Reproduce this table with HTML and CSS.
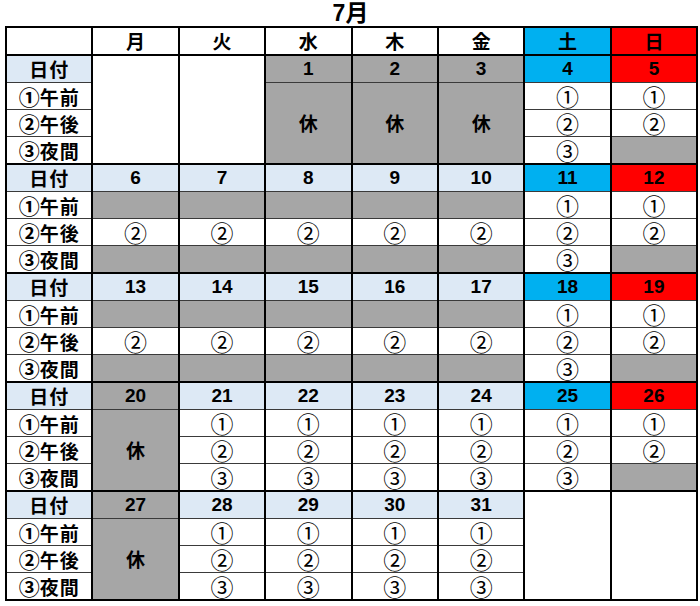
FILE: index.html
```html
<!DOCTYPE html>
<html lang="ja">
<head>
<meta charset="utf-8">
<title>7月</title>
<link rel="stylesheet" href="styles.css">
</head>
<body>
<div class="page">
  <div class="title">7月</div>
  <table class="cal">
    <colgroup>
      <col><col><col><col><col><col><col><col>
    </colgroup>
    <thead>
      <tr class="head">
        <th></th><th>月</th><th>火</th><th>水</th><th>木</th><th>金</th><th class="sat">土</th><th class="sun">日</th>
      </tr>
    </thead>
    <tbody class="week">
      <tr class="date">
        <th class="lbl day">日付</th>
        <td rowspan="4" class="blank"></td>
        <td rowspan="4" class="blank"></td>
        <td class="num off">1</td>
        <td class="num off">2</td>
        <td class="num off">3</td>
        <td class="num sat">4</td>
        <td class="num sun">5</td>
      </tr>
      <tr>
        <th class="lbl"><span class="c">①</span>午前</th>
        <td rowspan="3" class="off kyu">休</td>
        <td rowspan="3" class="off kyu">休</td>
        <td rowspan="3" class="off kyu">休</td>
        <td class="mk">①</td>
        <td class="mk">①</td>
      </tr>
      <tr>
        <th class="lbl"><span class="c">②</span>午後</th>
        <td class="mk">②</td>
        <td class="mk">②</td>
      </tr>
      <tr>
        <th class="lbl"><span class="c">③</span>夜間</th>
        <td class="mk">③</td>
        <td class="off"></td>
      </tr>
    </tbody>
    <tbody class="week">
      <tr class="date">
        <th class="lbl day">日付</th>
        <td class="num day">6</td><td class="num day">7</td><td class="num day">8</td><td class="num day">9</td><td class="num day">10</td>
        <td class="num sat">11</td><td class="num sun">12</td>
      </tr>
      <tr>
        <th class="lbl"><span class="c">①</span>午前</th>
        <td class="off"></td><td class="off"></td><td class="off"></td><td class="off"></td><td class="off"></td>
        <td class="mk">①</td><td class="mk">①</td>
      </tr>
      <tr>
        <th class="lbl"><span class="c">②</span>午後</th>
        <td class="mk">②</td><td class="mk">②</td><td class="mk">②</td><td class="mk">②</td><td class="mk">②</td>
        <td class="mk">②</td><td class="mk">②</td>
      </tr>
      <tr>
        <th class="lbl"><span class="c">③</span>夜間</th>
        <td class="off"></td><td class="off"></td><td class="off"></td><td class="off"></td><td class="off"></td>
        <td class="mk">③</td><td class="off"></td>
      </tr>
    </tbody>
    <tbody class="week">
      <tr class="date">
        <th class="lbl day">日付</th>
        <td class="num day">13</td><td class="num day">14</td><td class="num day">15</td><td class="num day">16</td><td class="num day">17</td>
        <td class="num sat">18</td><td class="num sun">19</td>
      </tr>
      <tr>
        <th class="lbl"><span class="c">①</span>午前</th>
        <td class="off"></td><td class="off"></td><td class="off"></td><td class="off"></td><td class="off"></td>
        <td class="mk">①</td><td class="mk">①</td>
      </tr>
      <tr>
        <th class="lbl"><span class="c">②</span>午後</th>
        <td class="mk">②</td><td class="mk">②</td><td class="mk">②</td><td class="mk">②</td><td class="mk">②</td>
        <td class="mk">②</td><td class="mk">②</td>
      </tr>
      <tr>
        <th class="lbl"><span class="c">③</span>夜間</th>
        <td class="off"></td><td class="off"></td><td class="off"></td><td class="off"></td><td class="off"></td>
        <td class="mk">③</td><td class="off"></td>
      </tr>
    </tbody>
    <tbody class="week">
      <tr class="date">
        <th class="lbl day">日付</th>
        <td class="num off">20</td>
        <td class="num day">21</td><td class="num day">22</td><td class="num day">23</td><td class="num day">24</td>
        <td class="num sat">25</td><td class="num sun">26</td>
      </tr>
      <tr>
        <th class="lbl"><span class="c">①</span>午前</th>
        <td rowspan="3" class="off kyu">休</td>
        <td class="mk">①</td><td class="mk">①</td><td class="mk">①</td><td class="mk">①</td>
        <td class="mk">①</td><td class="mk">①</td>
      </tr>
      <tr>
        <th class="lbl"><span class="c">②</span>午後</th>
        <td class="mk">②</td><td class="mk">②</td><td class="mk">②</td><td class="mk">②</td>
        <td class="mk">②</td><td class="mk">②</td>
      </tr>
      <tr>
        <th class="lbl"><span class="c">③</span>夜間</th>
        <td class="mk">③</td><td class="mk">③</td><td class="mk">③</td><td class="mk">③</td>
        <td class="mk">③</td><td class="off"></td>
      </tr>
    </tbody>
    <tbody class="week">
      <tr class="date">
        <th class="lbl day">日付</th>
        <td class="num off">27</td>
        <td class="num day">28</td><td class="num day">29</td><td class="num day">30</td><td class="num day">31</td>
        <td rowspan="4" class="blank"></td>
        <td rowspan="4" class="blank"></td>
      </tr>
      <tr>
        <th class="lbl"><span class="c">①</span>午前</th>
        <td rowspan="3" class="off kyu">休</td>
        <td class="mk">①</td><td class="mk">①</td><td class="mk">①</td><td class="mk">①</td>
      </tr>
      <tr>
        <th class="lbl"><span class="c">②</span>午後</th>
        <td class="mk">②</td><td class="mk">②</td><td class="mk">②</td><td class="mk">②</td>
      </tr>
      <tr>
        <th class="lbl"><span class="c">③</span>夜間</th>
        <td class="mk">③</td><td class="mk">③</td><td class="mk">③</td><td class="mk">③</td>
      </tr>
    </tbody>
  </table>
</div>
</body>
</html>
```

FILE: styles.css
```css
html, body {
  margin: 0;
  padding: 0;
  background: #ffffff;
}

body {
  font-family: "Liberation Sans", "Noto Sans CJK JP", sans-serif;
  color: #000000;
}

.page {
  width: 691px;
  margin-left: 5px;
}

.title {
  height: 26px;
  line-height: 26px;
  text-align: center;
  font-size: 23px;
  font-weight: bold;
  font-family: "Liberation Sans", "Noto Sans CJK JP", sans-serif;
}

.cal {
  width: 691px;
  table-layout: fixed;
  border-collapse: collapse;
  border: 2px solid #000;
}

.cal col {
  width: 86.4px;
}

.cal th,
.cal td {
  padding: 0;
  height: 26px;
  text-align: center;
  vertical-align: middle;
  border-left: 2px solid #000;
  border-right: 2px solid #000;
  border-top: 1px solid #3a3a3a;
  border-bottom: 1px solid #3a3a3a;
  font-size: 18px;
  line-height: 20px;
  background: #ffffff;
}

.cal .head th {
  font-family: "Noto Sans CJK JP", sans-serif;
  font-weight: bold;
  font-size: 19px;
  border-top: 2px solid #000;
  border-bottom: 2px solid #000;
}

.cal .date th,
.cal .date td {
  border-top: 2px solid #000;
}

.cal .week tr:last-child th,
.cal .week tr:last-child td {
  border-bottom: 2px solid #000;
}

.cal .blank {
  border-top: 2px solid #000;
  border-bottom: 2px solid #000;
}

.cal .lbl {
  font-family: "Noto Sans CJK JP", sans-serif;
  font-weight: bold;
  font-size: 19px;
  letter-spacing: 1px;
  white-space: nowrap;
}

.cal .lbl .c {
  font-size: 21px;
  letter-spacing: 0;
}

.cal .day {
  background: #dde9f5;
}

.cal .num {
  font-family: "Liberation Sans", sans-serif;
  font-weight: bold;
  font-size: 19px;
}

.cal .mk {
  font-family: "Noto Sans CJK JP", sans-serif;
  font-weight: normal;
  font-size: 23px;
}

.cal .kyu {
  font-family: "Noto Sans CJK JP", sans-serif;
  font-weight: bold;
  font-size: 19px;
}

.cal .off {
  background: #a6a6a6;
}

.cal .sat {
  background: #00b0f0;
}

.cal .sun {
  background: #ff0000;
}
```
